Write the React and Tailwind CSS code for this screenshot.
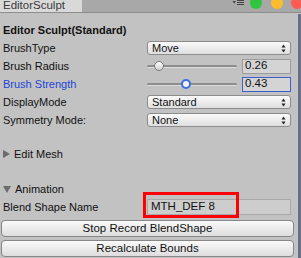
import React from 'react'

const font = { fontFamily: '"Liberation Sans", Arial, sans-serif' }

function Updown() {
  return (
    <svg width="5" height="9" viewBox="0 0 5 9" className="shrink-0">
      <path d="M2.5 0.5 L4.5 3.5 L0.5 3.5 Z" fill="#222" />
      <path d="M2.5 8.5 L4.5 5.5 L0.5 5.5 Z" fill="#222" />
    </svg>
  )
}

function Dropdown({ value }) {
  return (
    <div className="w-[144px] h-[14px] flex items-center justify-between pl-[4px] pr-[4px] rounded-[3px] border border-[#8c8c8c] bg-gradient-to-b from-[#fbfbfb] to-[#dedede] text-[11px] text-[#111]">
      <span>{value}</span>
      <Updown />
    </div>
  )
}

function Field({ value, active }) {
  return (
    <div
      className={
        active
          ? 'w-[49px] h-[15px] flex items-center pl-[2px] border border-[#3d5fd0] bg-[#d4d4d4] text-[11.5px] text-[#111]'
          : 'w-[49px] h-[15px] flex items-center pl-[2px] border border-[#9c9c9c] bg-[#d4d4d4] text-[11.5px] text-[#111]'
      }
    >
      {value}
    </div>
  )
}

function Row({ label, blue, children }) {
  return (
    <div className="h-[18px] flex items-center">
      <div className={blue ? 'w-[147px] pl-[3px] text-[#2245d8]' : 'w-[147px] pl-[3px] text-[#111]'}>{label}</div>
      {children}
    </div>
  )
}

export default function App() {
  return (
    <div className="relative w-[301px] h-[258px] overflow-hidden bg-[#c2c2c2] text-[11px]" style={font}>
      {/* title bar */}
      <div className="h-[13px] flex bg-[#a8a8a8] border-b border-[#8e8e8e]">
        <div className="w-[82px] h-full bg-[#d9d9d9] flex items-center pl-[3px] text-[11.5px] text-[#3a3a3a] leading-none">
          EditorSculpt
        </div>
        <div className="flex-1 relative">
          <svg className="absolute left-[150px] top-0" width="13" height="6" viewBox="0 0 13 6">
            <path d="M0.5 1 L4 1 L2.25 3.5 Z" fill="#444" />
            <rect x="5" y="0" width="7" height="1" fill="#444" />
            <rect x="5" y="2" width="7" height="1" fill="#444" />
            <rect x="5" y="4" width="7" height="1" fill="#444" />
          </svg>
          <div className="absolute left-[168px] top-[-3px] w-[12px] h-[12px] rounded-full bg-[#2fc53f]" />
          <div className="absolute left-[189px] top-[-3px] w-[12px] h-[12px] rounded-full bg-[#fbbd2e]" />
          <div className="absolute left-[209px] top-[-3px] w-[12px] h-[12px] rounded-full bg-[#fb5d55]" />
        </div>
      </div>

      <div className="pr-[7px]">
        <div className="h-[18px] mt-[8px] flex items-center pl-[3px] font-bold text-[11px] text-[#111]">
          Editor Sculpt(Standard)
        </div>
        <div>
          <Row label="BrushType">
            <Dropdown value="Move" />
          </Row>
          <Row label="Brush Radius">
            <div className="flex items-center gap-[5px]">
              <div className="w-[90px] relative h-[10px] flex items-center">
                <div className="w-full h-[3px] rounded-full bg-[#8d8d8d] border-b border-[#dcdcdc]" />
                <div className="absolute left-[7px] top-[0px] w-[10px] h-[10px] rounded-full border border-[#7a7a7a] bg-gradient-to-b from-[#ffffff] to-[#cfcfcf]" />
              </div>
              <Field value="0.26" />
            </div>
          </Row>
          <Row label="Brush Strength" blue>
            <div className="flex items-center gap-[5px]">
              <div className="w-[90px] relative h-[10px] flex items-center">
                <div className="w-full h-[3px] rounded-full bg-[#8d8d8d] border-b border-[#dcdcdc]" />
                <div className="absolute left-[34px] top-[0px] w-[10px] h-[10px] rounded-full border-2 border-[#3d6fe0] bg-[#f2f2f2]" />
              </div>
              <Field value="0.43" active />
            </div>
          </Row>
          <Row label="DisplayMode">
            <Dropdown value="Standard" />
          </Row>
          <Row label="Symmetry Mode:">
            <Dropdown value="None" />
          </Row>
        </div>

        <div className="h-[18px] mt-[16px] flex items-center gap-[4px] pl-[3px] text-[#111]">
          <svg width="7" height="8" viewBox="0 0 7 8">
            <path d="M0 0 L7 4 L0 8 Z" fill="#6b6b6b" />
          </svg>
          <span>Edit Mesh</span>
        </div>

        <div className="h-[18px] mt-[17px] flex items-center gap-[4px] pl-[3px] text-[#111]">
          <svg width="8" height="7" viewBox="0 0 8 7">
            <path d="M0 0 L8 0 L4 7 Z" fill="#6b6b6b" />
          </svg>
          <span>Animation</span>
        </div>

        <Row label="Blend Shape Name">
          <div className="w-[144px] h-[16px] flex items-center pl-[3px] border border-[#a8a8a8] bg-[#cdcdcd] text-[11.5px] text-[#111]">
            MTH_DEF 8
          </div>
        </Row>

        <div className="mt-[4px] flex flex-col gap-[3px] pl-[1px]">
          <div className="h-[17px] flex items-center justify-center rounded-[4px] border border-[#878787] bg-gradient-to-b from-[#fafafa] to-[#dddddd] text-[11.5px] text-[#111]">
            Stop Record BlendShape
          </div>
          <div className="h-[17px] flex items-center justify-center rounded-[4px] border border-[#878787] bg-gradient-to-b from-[#fafafa] to-[#dddddd] text-[11.5px] text-[#111]">
            Recalculate Bounds
          </div>
        </div>
      </div>

      {/* right edge strip */}
      <div className="absolute right-0 top-[14px] bottom-0 w-[3px] bg-[#66708a]" />

      {/* red annotation box */}
      <div className="absolute left-[143px] top-[192px] w-[96px] h-[26px] border-[3px] border-[#ff0000]" />
    </div>
  )
}
